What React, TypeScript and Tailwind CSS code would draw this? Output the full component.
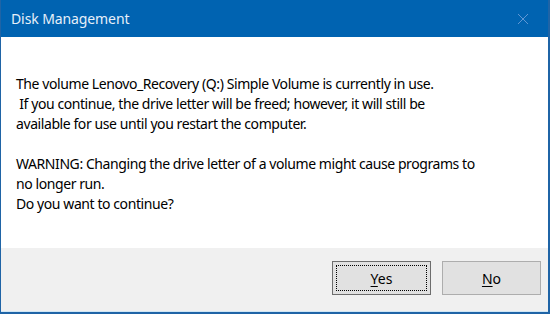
import React from 'react'

const font = { fontFamily: '"Noto Sans", "Open Sans", sans-serif' }

const App = () => {
  return (
    <div className="w-[550px] h-[314px] flex flex-col bg-white border-l border-r-2 border-b-2 border-[#1f64a6]" style={font}>
      <div className="h-[37px] bg-[#0063b1] flex items-center justify-between pl-[10px] pr-[16px] shrink-0">
        <span className="text-[14px] text-[#e6eff9] tracking-[-0.1px]">Disk Management</span>
        <svg width="12" height="12" viewBox="0 0 12 12" className="mr-[3px]">
          <path d="M1 1 L11 11 M11 1 L1 11" stroke="#5f97d4" strokeWidth="1" />
        </svg>
      </div>
      <div className="h-[211px] shrink-0 pt-[37px] pl-[15px] text-[14px] leading-[20px] text-black tracking-[-0.42px]">
        <p>The volume Lenovo_Recovery (Q:) Simple Volume is currently in use.</p>
        <p>&nbsp;If you continue, the drive letter will be freed; however, it will still be</p>
        <p>available for use until you restart the computer.</p>
        <p>&nbsp;</p>
        <p>WARNING: Changing the drive letter of a volume might cause programs to</p>
        <p>no longer run.</p>
        <p>Do you want to continue?</p>
      </div>
      <div className="flex-1 bg-[#f0f0f0] border-b border-[#cfe6f5] flex justify-end items-start pt-[13px] pr-[7px] gap-[11px]">
        <button className="w-[99px] h-[34px] bg-[#e1e1e1] border border-[#6d6d6d] p-[3px] text-[14px] text-black">
          <div className="w-full h-full border border-dotted border-black flex items-center justify-center">
            <span><span className="underline underline-offset-2">Y</span>es</span>
          </div>
        </button>
        <button className="w-[99px] h-[34px] bg-[#e1e1e1] border border-[#adadad] text-[14px] text-black flex items-center justify-center">
          <span><span className="underline underline-offset-2">N</span>o</span>
        </button>
      </div>
    </div>
  )
}

export default App
